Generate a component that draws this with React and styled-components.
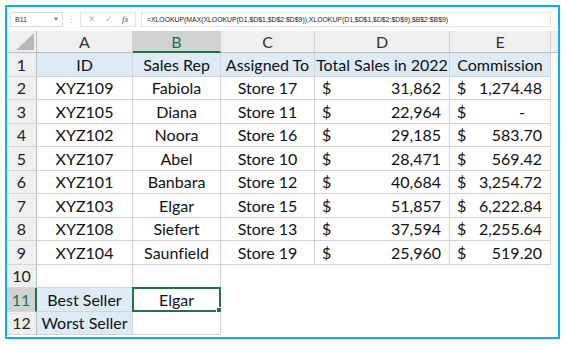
import React from "react";
import styled, {createGlobalStyle, css} from "styled-components";

const GlobalStyle = createGlobalStyle`
    html, body {
        margin: 0;
        padding: 0;
        background: #ffffff;
    }
    body {
        font-family: "Lato", "Liberation Sans", sans-serif;
        font-variant-ligatures: none;
    }
`;

const Frame = styled.div`
    margin: 5px;
    width: 555px;
    height: 334px;
    box-sizing: border-box;
    border: 2px solid #0cb0ef;
    background: #fff;
    overflow: hidden;
    display: flex;
    flex-direction: column;
`;

const FormulaBar = styled.div`
    height: 24px;
    display: flex;
    align-items: center;
    padding: 0 0 0 3px;
    flex-shrink: 0;
`;

const NameBox = styled.div`
    width: 53px;
    height: 15px;
    box-sizing: border-box;
    border: 1px solid #d9d9d9;
    display: flex;
    align-items: center;
    justify-content: space-between;
    padding: 0 3px 0 4px;
    font-family: "Liberation Sans", sans-serif;
    font-size: 7px;
    color: #333;
`;

const Caret = styled.span`
    font-size: 6px;
    color: #777;
`;

const Grip = styled.div`
    width: 17px;
    display: flex;
    justify-content: center;
    color: #c4c4c4;
    font-size: 9px;
    line-height: 1;
`;

const FxBox = styled.div`
    width: 56px;
    height: 15px;
    box-sizing: border-box;
    border: 1px solid #e2e2e2;
    display: flex;
    align-items: center;
    justify-content: space-around;
    padding: 0 2px;
    color: #b3b3b3;
    font-size: 9px;
    font-family: "Liberation Sans", sans-serif;
`;

const Fx = styled.span`
    font-family: "Liberation Serif", serif;
    font-style: italic;
    font-size: 9px;
    color: #555;
`;

const FormulaInput = styled.div`
    margin-left: 5px;
    width: 410px;
    height: 15px;
    box-sizing: border-box;
    border: 1px solid #e2e2e2;
    display: flex;
    align-items: center;
    padding-left: 5px;
    font-family: "Liberation Sans", sans-serif;
    font-size: 6.85px;
    color: #222;
    white-space: nowrap;
    overflow: hidden;
`;

const Sheet = styled.div`
    display: grid;
    grid-template-columns: 30px 96px 88px 94px 135px 101px 1fr;
    grid-template-rows: 22px repeat(12, 23.5px);
    font-size: 16px;
    color: #111;
`;

const ColHead = styled.div`
    background: ${p => p.$active ? "#d2d2d2" : "#efefef"};
    color: ${p => p.$active ? "#217346" : "#333"};
    border-right: 1px solid #d0d0d0;
    border-bottom: ${p => p.$active ? "2px solid #217346" : "1px solid #bdbdbd"};
    box-sizing: border-box;
    display: flex;
    align-items: center;
    justify-content: center;
    font-size: 16px;
`;

const Filler = styled.div`
    background: ${p => p.$head ? "#efefef" : "#fff"};
    ${p => p.$head && css`border-bottom: 1px solid #bdbdbd;`}
    box-sizing: border-box;
`;

const Corner = styled.div`
    background: #efefef;
    border-right: 1px solid #bdbdbd;
    border-bottom: 1px solid #bdbdbd;
    box-sizing: border-box;
    display: flex;
    align-items: flex-end;
    justify-content: flex-end;
    padding: 0 2px 2px 0;
`;

const RowHead = styled.div`
    background: ${p => p.$active ? "#d2d2d2" : "#efefef"};
    color: ${p => p.$active ? "#217346" : "#222"};
    border-right: ${p => p.$active ? "2px solid #217346" : "1px solid #bdbdbd"};
    border-bottom: 1px solid #d6d6d6;
    box-sizing: border-box;
    display: flex;
    align-items: center;
    justify-content: center;
    font-size: 16px;
`;

const Cell = styled.div`
    position: relative;
    box-sizing: border-box;
    background: ${p => p.$fill ? "#ddebf7" : "#fff"};
    ${p => p.$grid && css`
        border-right: 1px solid #d4d4d4;
        border-bottom: 1px solid #d4d4d4;
    `}
    ${p => p.$selected && css`
        border: 2px solid #217346;
        margin: -1px 0 0 -1px;
    `}
    display: flex;
    align-items: center;
    justify-content: ${p => p.$acct ? "space-between" : "center"};
    padding: ${p => p.$acct ? "0 8px 0 7px" : "0"};
    white-space: nowrap;
`;

const Handle = styled.span`
    position: absolute;
    right: -4px;
    bottom: -4px;
    width: 5px;
    height: 5px;
    background: #217346;
    border: 1px solid #fff;
`;

const Dash = styled.span`
    padding-right: 17px;
`;

const cols = ["A", "B", "C", "D", "E"];

const data = [
    ["XYZ109", "Fabiola", "Store 17", "31,862", "1,274.48"],
    ["XYZ105", "Diana", "Store 11", "22,964", "-"],
    ["XYZ102", "Noora", "Store 16", "29,185", "583.70"],
    ["XYZ107", "Abel", "Store 10", "28,471", "569.42"],
    ["XYZ101", "Banbara", "Store 12", "40,684", "3,254.72"],
    ["XYZ103", "Elgar", "Store 15", "51,857", "6,222.84"],
    ["XYZ108", "Siefert", "Store 13", "37,594", "2,255.64"],
    ["XYZ104", "Saunfield", "Store 19", "25,960", "519.20"],
];

const Money = ({value}) => (
    <Cell $grid $acct>
        <span>$</span>
        {value === "-" ? <Dash>-</Dash> : <span>{value}</span>}
    </Cell>
);

export default function App() {
    return (
        <>
            <GlobalStyle/>
            <Frame>
                <FormulaBar>
                    <NameBox>B11<Caret>▼</Caret></NameBox>
                    <Grip>⋮</Grip>
                    <FxBox>
                        <span>✕</span>
                        <span>✓</span>
                        <Fx>fx</Fx>
                    </FxBox>
                    <FormulaInput>
                        =XLOOKUP(MAX(XLOOKUP(D1,$D$1,$D$2:$D$9)),XLOOKUP(D1,$D$1,$D$2:$D$9),$B$2:$B$9)
                    </FormulaInput>
                </FormulaBar>
                <Sheet>
                    <Corner>
                        <svg width="18" height="17" viewBox="0 0 18 17">
                            <polygon points="18,0 18,17 0,17" fill="#b8b8b8"/>
                        </svg>
                    </Corner>
                    {cols.map(c => <ColHead key={c} $active={c === "B"}>{c}</ColHead>)}
                    <Filler $head/>

                    <RowHead>1</RowHead>
                    <Cell $grid $fill>ID</Cell>
                    <Cell $grid $fill>Sales Rep</Cell>
                    <Cell $grid $fill>Assigned To</Cell>
                    <Cell $grid $fill>Total Sales in 2022</Cell>
                    <Cell $grid $fill>Commission</Cell>
                    <Filler/>

                    {data.map((r, i) => (
                        <React.Fragment key={r[0]}>
                            <RowHead>{i + 2}</RowHead>
                            <Cell $grid>{r[0]}</Cell>
                            <Cell $grid>{r[1]}</Cell>
                            <Cell $grid>{r[2]}</Cell>
                            <Money value={r[3]}/>
                            <Money value={r[4]}/>
                            <Filler/>
                        </React.Fragment>
                    ))}

                    <RowHead>10</RowHead>
                    <Cell $grid/>
                    <Cell $grid/>
                    <Cell/><Cell/><Cell/><Filler/>

                    <RowHead $active>11</RowHead>
                    <Cell $grid $fill>Best Seller</Cell>
                    <Cell $selected>Elgar<Handle/></Cell>
                    <Cell/><Cell/><Cell/><Filler/>

                    <RowHead>12</RowHead>
                    <Cell $grid $fill>Worst Seller</Cell>
                    <Cell $grid/>
                    <Cell/><Cell/><Cell/><Filler/>
                </Sheet>
            </Frame>
        </>
    );
}
